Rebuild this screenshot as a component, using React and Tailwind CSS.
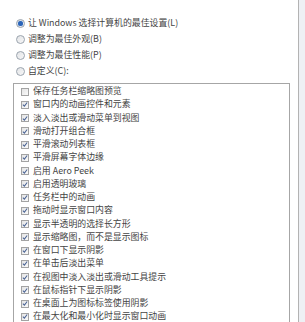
const MODES = [
  { label: '让 Windows 选择计算机的最佳设置(L)', checked: true },
  { label: '调整为最佳外观(B)', checked: false },
  { label: '调整为最佳性能(P)', checked: false },
  { label: '自定义(C):', checked: false },
];

const EFFECTS = [
  ['保存任务栏缩略图预览', false],
  ['窗口内的动画控件和元素', true],
  ['淡入淡出或滑动菜单到视图', true],
  ['滑动打开组合框', true],
  ['平滑滚动列表框', true],
  ['平滑屏幕字体边缘', true],
  ['启用 Aero Peek', true],
  ['启用透明玻璃', true],
  ['任务栏中的动画', true],
  ['拖动时显示窗口内容', true],
  ['显示半透明的选择长方形', true],
  ['显示缩略图，而不是显示图标', true],
  ['在窗口下显示阴影', true],
  ['在单击后淡出菜单', true],
  ['在视图中淡入淡出或滑动工具提示', true],
  ['在鼠标指针下显示阴影', true],
  ['在桌面上为图标标签使用阴影', true],
  ['在最大化和最小化时显示窗口动画', true],
];

function Radio({ checked }) {
  return (
    <span className="flex items-center justify-center w-[9px] h-[9px] rounded-full border border-[#9aa3ad] bg-gradient-to-br from-[#e2e4e7] to-[#f7f7f7] shrink-0">
      {checked && <span className="w-[5px] h-[5px] rounded-full bg-[#2a64b8] shadow-[0_0_1px_#7aa6e0]" />}
    </span>
  );
}

function Checkbox({ checked }) {
  return (
    <span className="flex items-center justify-center w-[8px] h-[8px] border border-[#a3a3a3] bg-gradient-to-br from-[#e4e4e4] to-[#fafafa] shrink-0">
      {checked && (
        <svg width="7" height="7" viewBox="0 0 7 7">
          <path d="M1 3.6 L2.8 5.4 L6 1.2" fill="none" stroke="#4a6394" strokeWidth="1.2" />
        </svg>
      )}
    </span>
  );
}

export default function App() {
  return (
    <div className="flex w-[305px] h-[322px] overflow-hidden bg-white text-[#444] text-[8.9px] leading-none font-['Noto_Sans_CJK_SC',sans-serif]">
      <div className="w-[298px] shrink-0 pt-[15px]">
        {/* performance mode radios */}
        <div className="flex flex-col">
          {MODES.map((m) => (
            <div key={m.label} className="flex items-center gap-[2px] h-[16px] pl-[16px]">
              <Radio checked={m.checked} />
              <span className="ml-[1px]">{m.label}</span>
            </div>
          ))}
        </div>

        {/* visual effects list */}
        <div className="mt-[4px] ml-[13px] w-[277px] h-[260px] border border-[#a6a6a6] pt-[1px]">
          {EFFECTS.map(([label, checked]) => (
            <div key={label} className="flex items-center gap-[4px] h-[13.25px] pl-[7px]">
              <Checkbox checked={checked} />
              <span className="whitespace-nowrap">{label}</span>
            </div>
          ))}
        </div>
      </div>
      <div className="flex-1 border-l border-[#b3b3b3] bg-[#eef0f4]" />
    </div>
  );
}
